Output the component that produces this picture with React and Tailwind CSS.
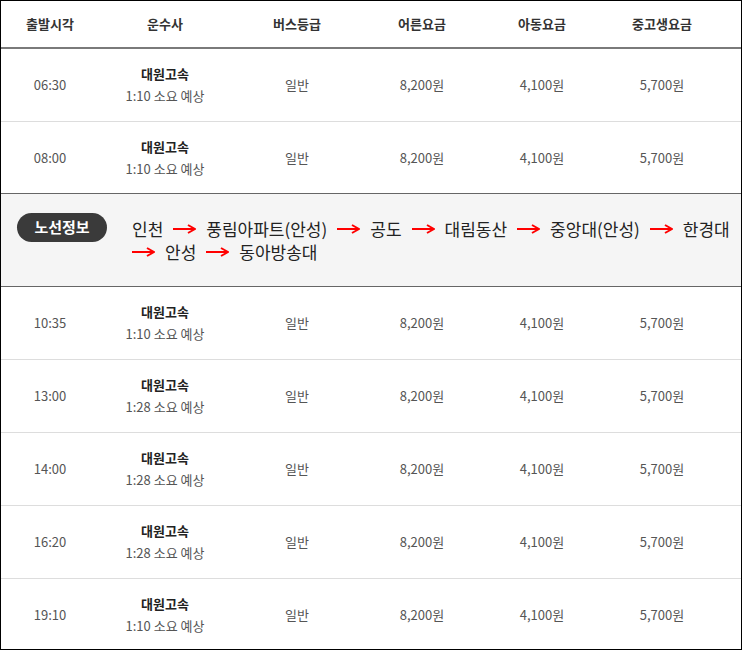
import React from "react";

const rows = [
  ["06:30", "1:10"],
  ["08:00", "1:10"],
  null,
  ["10:35", "1:10"],
  ["13:00", "1:28"],
  ["14:00", "1:28"],
  ["16:20", "1:28"],
  ["19:10", "1:10"],
];

const cols = "grid grid-cols-[98px_132px_132px_118px_122px_118px]";

function Arrow() {
  return (
    <svg width="23" height="10" viewBox="0 0 23 10" className="inline-block shrink-0">
      <path d="M0 5 H21" stroke="#ff0000" strokeWidth="2" fill="none" />
      <path d="M15 1 L22 5 L15 9" stroke="#ff0000" strokeWidth="2" fill="none" strokeLinejoin="miter" />
    </svg>
  );
}

const stops = ["인천", "풍림아파트(안성)", "공도", "대림동산", "중앙대(안성)", "한경대", "안성", "동아방송대"];

function Route() {
  const items = [];
  stops.forEach((s, i) => {
    if (i > 0) items.push(<Arrow key={"a" + i} />);
    items.push(
      <span key={"s" + i} className="whitespace-nowrap">
        {s}
      </span>
    );
  });
  return (
    <div className="h-[93px] bg-[#f5f5f5] border-b border-[#666] flex items-start pt-[19px] pl-4">
      <div className="w-[90px] h-[29px] rounded-full bg-[#3a3a3a] text-white font-bold text-[15px] flex items-center justify-center shrink-0">
        노선정보
      </div>
      <div className="ml-[25px] mt-[4px] w-[608px] flex flex-wrap items-center gap-x-[10px] text-[17px] leading-[23px] text-[#222]">
        {items}
      </div>
    </div>
  );
}

export default function App() {
  return (
    <div
      className="w-[742px] h-[650px] border border-black overflow-hidden bg-white"
      style={{ fontFamily: '"Noto Sans CJK KR", "Noto Sans", sans-serif' }}
    >
      <div className={cols + " h-[48px] border-b-2 border-[#7a7a7a] items-center text-[13px] font-bold text-[#333]"}>
        {["출발시각", "운수사", "버스등급", "어른요금", "아동요금", "중고생요금"].map((h) => (
          <div key={h} className="text-center">
            {h}
          </div>
        ))}
      </div>
      {rows.map((r, i) => {
        if (!r) return <Route key="route" />;
        const nextIsRoute = rows[i + 1] === null;
        return (
          <div
            key={i}
            className={
              cols +
              " items-center text-[13px] text-[#555] " +
              (nextIsRoute ? "h-[72px] border-b border-[#666]" : "h-[73px] border-b border-[#ddd]")
            }
          >
            <div className="text-center">{r[0]}</div>
            <div className="text-center leading-[22px]">
              <div className="font-bold text-[#222]">대원고속</div>
              <div>{r[1]} 소요 예상</div>
            </div>
            <div className="text-center">일반</div>
            <div className="text-center">8,200원</div>
            <div className="text-center">4,100원</div>
            <div className="text-center">5,700원</div>
          </div>
        );
      })}
    </div>
  );
}
